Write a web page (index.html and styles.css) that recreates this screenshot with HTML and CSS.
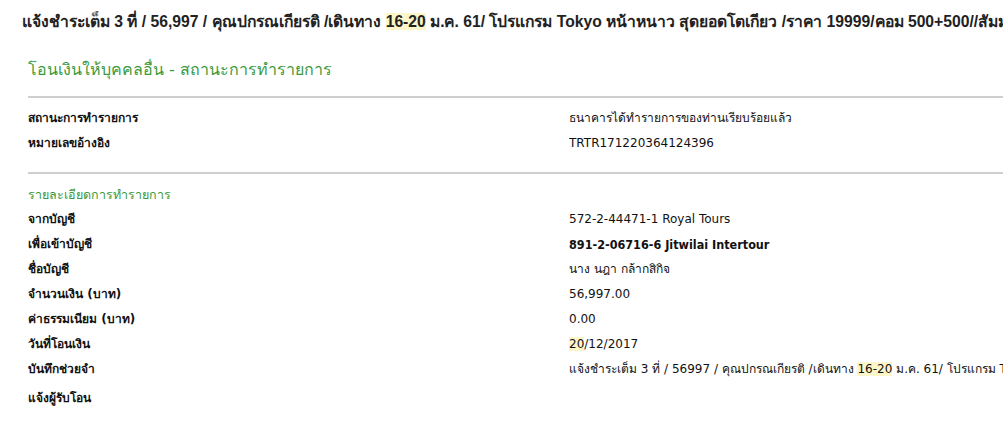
FILE: index.html
```html
<!DOCTYPE html>
<html lang="th">
<head>
<meta charset="utf-8">
<title>สถานะการทำรายการ</title>
<link rel="stylesheet" href="styles.css">
</head>
<body>
<div class="page">
  <div class="subject">แจ้งชำระเต็ม 3 ที่ / 56,997 / คุณปกรณเกียรติ /เดินทาง <span class="hl">16-20</span> ม.ค. 61/ โปรแกรม Tokyo หน้าหนาว สุดยอดโตเกียว /ราคา 19999/คอม 500+500//สัมมนา</div>

  <div class="content">
    <h1 class="title">โอนเงินให้บุคคลอื่น - สถานะการทำรายการ</h1>
    <div class="rule"></div>

    <div class="rows">
      <div class="label">สถานะการทำรายการ</div>
      <div class="value">ธนาคารได้ทำรายการของท่านเรียบร้อยแล้ว</div>
      <div class="label">หมายเลขอ้างอิง</div>
      <div class="value">TRTR171220364124396</div>
    </div>

    <div class="rule rule2"></div>

    <h2 class="section">รายละเอียดการทำรายการ</h2>
    <div class="rows rows-detail">
      <div class="label">จากบัญชี</div>
      <div class="value">572-2-44471-1 Royal Tours</div>
      <div class="label">เพื่อเข้าบัญชี</div>
      <div class="value strong">891-2-06716-6 Jitwilai Intertour</div>
      <div class="label">ชื่อบัญชี</div>
      <div class="value">นาง นฎา กล้ากสิกิจ</div>
      <div class="label">จำนวนเงิน (บาท)</div>
      <div class="value">56,997.00</div>
      <div class="label">ค่าธรรมเนียม (บาท)</div>
      <div class="value">0.00</div>
      <div class="label">วันที่โอนเงิน</div>
      <div class="value"><span class="hl">20</span>/12/2017</div>
      <div class="label">บันทึกช่วยจำ</div>
      <div class="value memo">แจ้งชำระเต็ม 3 ที่ / 56997 / คุณปกรณเกียรติ /เดินทาง <span class="hl">16-20</span> ม.ค. 61/ โปรแกรม Tokyo หน้าหนาว สุดยอดโตเกียว</div>
      <div class="label last">แจ้งผู้รับโอน</div>
      <div class="value last"></div>
    </div>
  </div>
</div>
</body>
</html>
```

FILE: styles.css
```css
html, body {
  margin: 0;
  padding: 0;
  background: #fff;
  overflow: hidden;
}

.page {
  width: 1003px;
  height: 422px;
  overflow: hidden;
  color: #111;
}

.subject {
  font-family: "Liberation Sans", Arial, sans-serif;
  font-weight: bold;
  font-size: 15.7px;
  line-height: 20px;
  white-space: nowrap;
  padding: 12px 0 0 22px;
  height: 24px;
  color: #222;
}

.hl {
  background: #fcf6c8;
}

.content {
  padding-left: 28px;
  font-family: "DejaVu Sans", Tahoma, sans-serif;
  font-size: 12px;
}

.title {
  margin: 0;
  font-size: 16px;
  font-weight: normal;
  color: #3b9a3b;
  line-height: 22px;
  padding-top: 23px;
  height: 37px;
}

.rule {
  height: 2px;
  background: #cfcfcf;
}

.rows {
  display: grid;
  grid-template-columns: 541px 1fr;
  grid-auto-rows: 25px;
  padding-top: 8px;
}

.rows + .rule2 {
  margin-top: 16px;
}

.label {
  font-weight: bold;
  line-height: 25px;
  white-space: nowrap;
}

.value {
  line-height: 25px;
  white-space: nowrap;
  overflow: hidden;
}

.strong {
  font-family: "DejaVu Sans Condensed", "Liberation Sans Narrow", "DejaVu Sans", sans-serif;
  font-weight: bold;
  font-size: 12.5px;
}

.last {
  line-height: 33px;
  height: 33px;
}

.section {
  margin: 0;
  font-size: 12.5px;
  font-weight: normal;
  color: #3b9a3b;
  line-height: 20px;
  padding-top: 11px;
  height: 18px;
}

.rows-detail {
  padding-top: 4px;
}
```
